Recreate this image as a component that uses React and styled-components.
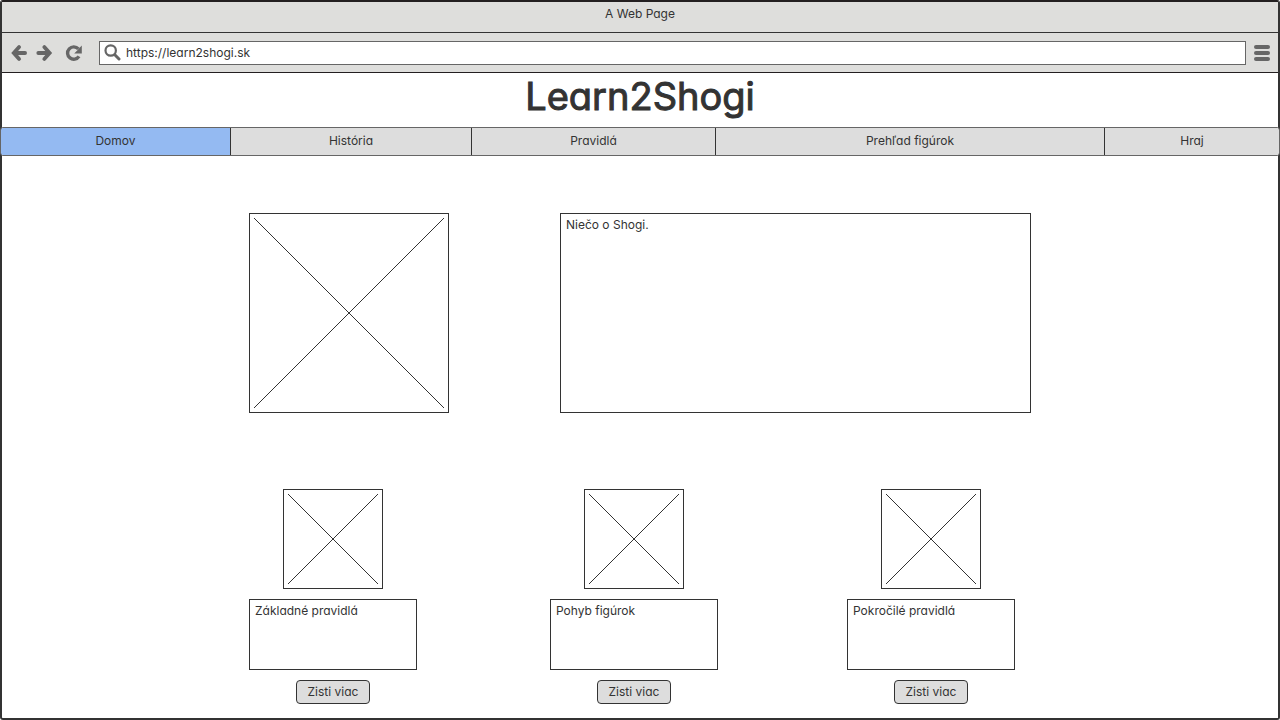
import React from "react";
import styled, { createGlobalStyle } from "styled-components";

const ink = "#333333";
const chrome = "#dededc";
const iconGrey = "#666666";

const GlobalStyle = createGlobalStyle`
  *, *::before, *::after { box-sizing: border-box; }
  body {
    margin: 0;
    background: #ffffff;
    color: ${ink};
    font-family: "Inter", "Noto Sans", sans-serif;
    font-feature-settings: "cv11";
    font-size: 12px;
    line-height: 16px;
  }
`;

const BrowserWindow = styled.div`
  min-height: 100vh;
  border: 2px solid ${ink};
  border-top-color: #231f20;
  border-radius: 3px;
`;

const TitleBar = styled.div`
  height: 31px;
  padding-top: 4px;
  background: ${chrome};
  border-bottom: 1px solid ${ink};
  text-align: center;
`;

const Toolbar = styled.div`
  display: flex;
  align-items: center;
  height: 40px;
  padding: 0 7px 0 8px;
  background: ${chrome};
  border-bottom: 1px solid #231f20;
`;

const ToolButtons = styled.div`
  display: flex;
  gap: 8px;
  margin-right: 16px;
`;

const ToolButton = styled.button`
  display: block;
  flex: none;
  width: 18px;
  height: 18px;
  padding: 0;
  border: 0;
  background: none;
  color: ${iconGrey};
  margin-left: ${(p) => (p.$spaced ? "3px" : "0")};

  svg { display: block; }
`;

const AddressBar = styled.label`
  display: flex;
  flex: 1;
  align-items: center;
  gap: 5px;
  height: 24px;
  margin-right: 7px;
  padding: 0 4px;
  background: #ffffff;
  border: 1px solid ${iconGrey};
  color: ${iconGrey};

  svg { flex: none; }
`;

const AddressInput = styled.input`
  flex: 1;
  min-width: 0;
  padding: 0;
  border: 0;
  outline: 0;
  background: transparent;
  color: ${ink};
  font: inherit;
  font-feature-settings: inherit;
`;

const SiteTitle = styled.h1`
  margin: 0;
  height: 54px;
  font-size: 38px;
  font-weight: 400;
  line-height: 46px;
  text-align: center;
  -webkit-text-stroke: 1px ${ink};
`;

const Nav = styled.nav`
  display: grid;
  grid-template-columns: 230fr 241fr 244fr 389fr 174fr;
  height: 29px;
  margin: 0 -2px;
  border: 1px solid ${iconGrey};
  border-radius: 3px;
  overflow: hidden;
`;

const NavLink = styled.a`
  padding-top: 5px;
  background: ${(p) => (p.$active ? "#94baf2" : "#dddddd")};
  border-right: 1px solid ${ink};
  color: ${ink};
  text-align: center;
  text-decoration: none;

  &:last-child { border-right: 0; }
`;

const Main = styled.main`
  max-width: 782px;
  margin: 0 auto;
  padding: 57px 0 14px;
`;

const Intro = styled.section`
  display: flex;
  justify-content: space-between;
  margin-bottom: 76px;
`;

const Picture = styled.svg`
  display: block;
  flex: none;
  width: ${(p) => p.$size}px;
  height: ${(p) => p.$size}px;
  border: 1px solid ${ink};
`;

const TextBox = styled.p`
  width: ${(p) => p.$width};
  min-height: ${(p) => p.$height};
  margin: 0;
  padding: 3px 5px;
  border: 1px solid ${ink};
`;

const Cards = styled.section`
  display: grid;
  grid-template-columns: 301fr 297fr 184fr;
`;

const Card = styled.article`
  display: flex;
  flex-direction: column;
  align-items: center;
  gap: 10px;
  width: 168px;
`;

const MoreButton = styled.button`
  width: 74px;
  height: 24px;
  padding: 0;
  background: #dddddd;
  border: 1px solid ${ink};
  border-radius: 4px;
  color: ${ink};
  font: inherit;
  font-feature-settings: inherit;
`;

function ArrowIcon({ forward }) {
  return (
    <svg width="18" height="18" viewBox="0 0 18 18" fill="none" stroke="currentColor" strokeWidth="3.8" strokeLinecap="round" aria-hidden="true">
      <path d={forward ? "M2.3 9H13M8.3 3.1 13.6 9l-5.3 5.9" : "M15.1 9H5M9.1 3.1 3.8 9l5.3 5.9"} />
    </svg>
  );
}

function ReloadIcon() {
  return (
    <svg width="18" height="18" viewBox="0 0 18 18" aria-hidden="true">
      <path d="M13.4 4.9A6.2 6.2 0 1 0 14 12.4" fill="none" stroke="currentColor" strokeWidth="3.4" />
      <path d="M16.8 1.6V9.6H9.2l3-3 2.2-2.6z" fill="currentColor" />
    </svg>
  );
}

function SearchIcon() {
  return (
    <svg width="17" height="17" viewBox="0 0 17 17" fill="none" stroke="currentColor" aria-hidden="true">
      <circle cx="6.7" cy="6.5" r="5.2" strokeWidth="2.2" />
      <path d="M10.8 10.8l4.2 4.2" strokeWidth="3" strokeLinecap="round" />
    </svg>
  );
}

function MenuIcon() {
  return (
    <svg width="18" height="18" viewBox="0 0 18 18" fill="currentColor" aria-hidden="true">
      <rect x="1" y="1" width="16" height="4" rx="2" />
      <rect x="1" y="7" width="16" height="4" rx="2" />
      <rect x="1" y="13" width="16" height="4" rx="2" />
    </svg>
  );
}

function Placeholder({ size, label }) {
  const end = size - 6;
  return (
    <Picture $size={size} role="img" aria-label={label} stroke={ink} shapeRendering="crispEdges">
      <path d={`M4 4L${end} ${end}M${end} 4L4 ${end}`} />
    </Picture>
  );
}

const sections = ["Domov", "História", "Pravidlá", "Prehľad figúrok", "Hraj"];
const topics = ["Základné pravidlá", "Pohyb figúrok", "Pokročilé pravidlá"];

export default function App() {
  return (
    <>
      <GlobalStyle />
      <BrowserWindow>
        <TitleBar>A Web Page</TitleBar>
        <Toolbar>
          <ToolButtons>
            <ToolButton aria-label="Späť"><ArrowIcon /></ToolButton>
            <ToolButton aria-label="Dopredu"><ArrowIcon forward /></ToolButton>
            <ToolButton aria-label="Obnoviť" $spaced><ReloadIcon /></ToolButton>
          </ToolButtons>
          <AddressBar>
            <SearchIcon />
            <AddressInput type="text" aria-label="Adresa" defaultValue="https://learn2shogi.sk" />
          </AddressBar>
          <ToolButton aria-label="Ponuka"><MenuIcon /></ToolButton>
        </Toolbar>
        <SiteTitle>Learn2Shogi</SiteTitle>
        <Nav>
          {sections.map((name, i) => (
            <NavLink key={name} href="#" $active={i === 0}>{name}</NavLink>
          ))}
        </Nav>
        <Main>
          <Intro>
            <Placeholder size={200} label="Shogi" />
            <TextBox $width="471px" $height="200px">Niečo o Shogi.</TextBox>
          </Intro>
          <Cards>
            {topics.map((topic) => (
              <Card key={topic}>
                <Placeholder size={100} label={topic} />
                <TextBox $width="100%" $height="71px">{topic}</TextBox>
                <MoreButton>Zisti viac</MoreButton>
              </Card>
            ))}
          </Cards>
        </Main>
      </BrowserWindow>
    </>
  );
}
